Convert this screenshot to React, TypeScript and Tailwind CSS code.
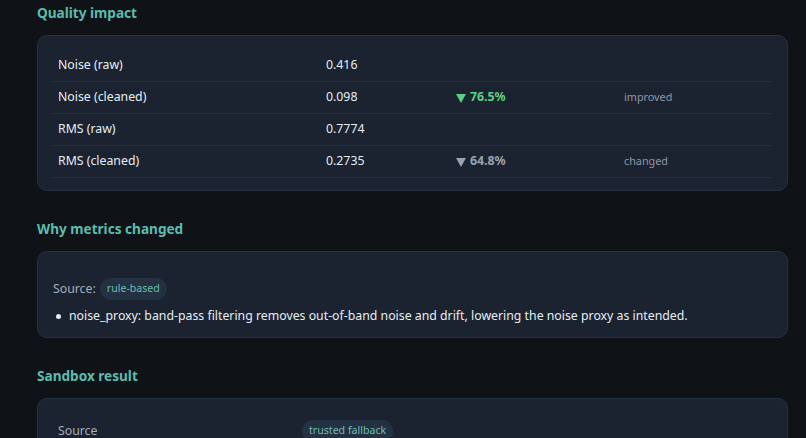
import React from 'react';

const rows = [
  { label: 'Noise (raw)', value: '0.416' },
  { label: 'Noise (cleaned)', value: '0.098', delta: '76.5%', tone: 'good', note: 'improved' },
  { label: 'RMS (raw)', value: '0.7774' },
  { label: 'RMS (cleaned)', value: '0.2735', delta: '64.8%', tone: 'neutral', note: 'changed' },
];

const Heading: React.FC<{ children: React.ReactNode }> = ({ children }) => (
  <h2 className="h-[20px] text-[13.6px] font-bold leading-[20px] text-[#5cbcae]">{children}</h2>
);

const Chip: React.FC<{ children: React.ReactNode }> = ({ children }) => (
  <span className="inline-flex h-[22px] items-center rounded-full bg-[#243142] px-[7px] text-[10.6px] text-[#6cbdb4]">
    {children}
  </span>
);

const Card: React.FC<{ className?: string; children: React.ReactNode }> = ({ className = '', children }) => (
  <div className={`mt-[12px] rounded-[10px] border border-[#253040] bg-[#1b2331] px-[15px] ${className}`}>
    {children}
  </div>
);

export default function App() {
  return (
    <div
      className="min-h-screen w-full bg-[#0f1318] pl-[37px] pr-[18px] pt-[3px] text-[#e6edf3]"
      style={{ fontFamily: '"Noto Sans", "Open Sans", sans-serif' }}
    >
      <Heading>Quality impact</Heading>
      <Card className="pb-[12px] pt-[14px]">
        {rows.map((r) => (
          <div
            key={r.label}
            className="grid h-[32px] grid-cols-[268px_130px_168px_1fr] items-center border-b border-[#273140] pl-[5px] text-[12.3px]"
          >
            <span>{r.label}</span>
            <span>{r.value}</span>
            <span
              className={`flex items-center gap-[4px] font-bold ${r.tone === 'good' ? 'text-[#5ccf86]' : 'text-[#98a3b2]'}`}
            >
              {r.delta && (
                <>
                  <svg width="10" height="9" viewBox="0 0 10 9" className="mt-[1px]">
                    <path d="M0 0H10L5 9Z" fill="currentColor" />
                  </svg>
                  {r.delta}
                </>
              )}
            </span>
            <span className="text-[10.8px] text-[#8c97a6]">{r.note ?? ''}</span>
          </div>
        ))}
      </Card>

      <div className="mt-[28px]">
        <Heading>Why metrics changed</Heading>
        <Card className="pb-[11px] pt-[26px]">
          <div className="flex items-center gap-[4px] text-[12.3px] text-[#a3adba]">
            <span>Source:</span>
            <Chip>rule-based</Chip>
          </div>
          <div className="mt-[6px] flex items-center text-[12.3px] leading-[20px]">
            <span className="ml-[3px] mr-[8px] h-[5px] w-[5px] rounded-full bg-[#e6edf3]" />
            <span>
              noise_proxy: band-pass filtering removes out-of-band noise and drift, lowering the noise proxy as intended.
            </span>
          </div>
        </Card>
      </div>

      <div className="mt-[28px]">
        <Heading>Sandbox result</Heading>
        <Card className="pt-[21px] pb-[12px]">
          <div className="grid grid-cols-[244px_1fr] items-center pl-[5px] text-[12.3px]">
            <span className="text-[#a3adba]">Source</span>
            <span>
              <Chip>trusted fallback</Chip>
            </span>
          </div>
        </Card>
      </div>
    </div>
  );
}
